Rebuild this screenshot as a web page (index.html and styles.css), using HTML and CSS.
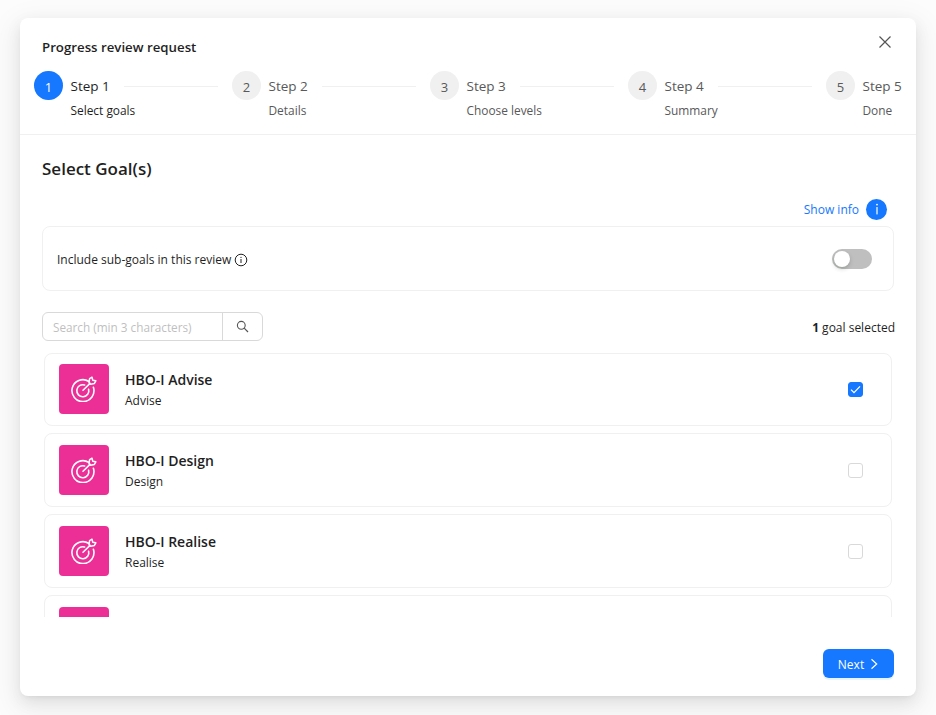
FILE: index.html
```html
<!DOCTYPE html>
<html lang="en">
<head>
<meta charset="utf-8">
<title>Progress review request</title>
<link rel="stylesheet" href="styles.css">
</head>
<body>
<svg class="defs" width="0" height="0" aria-hidden="true">
  <symbol id="target" viewBox="0 0 26 26">
    <path d="M17.6 5.2A11 11 0 1 0 22.4 11.2" fill="none" stroke="currentColor" stroke-width="1.6" stroke-linecap="round"/>
    <path d="M13.6 9A6 6 0 1 0 17.6 13.2" fill="none" stroke="currentColor" stroke-width="1.6" stroke-linecap="round"/>
    <path d="M12 14.3 19 7.4" fill="none" stroke="currentColor" stroke-width="1.6" stroke-linecap="round"/>
    <path d="M18 6.6 18.6 2.6 21 1.2 21.8 4.2 24.8 4.8 23.4 7.4 19.6 8.2z" fill="none" stroke="currentColor" stroke-width="1.5" stroke-linejoin="round"/>
  </symbol>
</svg>
<main class="modal">
  <header class="head">
    <h1 class="title">Progress review request</h1>
    <button class="close" aria-label="Close">
      <svg width="14" height="14" viewBox="0 0 14 14"><path d="M1.5 1.5l11 11M12.5 1.5l-11 11" fill="none" stroke="#555" stroke-width="1.2"/></svg>
    </button>
    <ol class="steps">
      <li class="step active"><span class="num">1</span><div class="step-text"><div class="step-top"><span class="step-name">Step 1</span><i class="line"></i></div><div class="step-sub">Select goals</div></div></li>
      <li class="step"><span class="num">2</span><div class="step-text"><div class="step-top"><span class="step-name">Step 2</span><i class="line"></i></div><div class="step-sub">Details</div></div></li>
      <li class="step"><span class="num">3</span><div class="step-text"><div class="step-top"><span class="step-name">Step 3</span><i class="line"></i></div><div class="step-sub">Choose levels</div></div></li>
      <li class="step"><span class="num">4</span><div class="step-text"><div class="step-top"><span class="step-name">Step 4</span><i class="line"></i></div><div class="step-sub">Summary</div></div></li>
      <li class="step last"><span class="num">5</span><div class="step-text"><div class="step-top"><span class="step-name">Step 5</span></div><div class="step-sub">Done</div></div></li>
    </ol>
  </header>
  <section class="body">
    <h2 class="heading">Select Goal(s)</h2>
    <div class="info-row">
      <a class="show-info">Show info</a>
      <span class="info-badge"><svg width="4" height="12" viewBox="0 0 4 12"><circle cx="2" cy="1.6" r="0.9" fill="#fff"/><rect x="1.4" y="4" width="1.2" height="7.4" fill="#fff"/></svg></span>
    </div>
    <div class="option">
      <span class="option-label">Include sub-goals in this review
        <svg class="tip" width="14" height="14" viewBox="0 0 14 14"><circle cx="7" cy="7" r="5.8" fill="none" stroke="#222" stroke-width="1"/><rect x="6.5" y="6" width="1" height="4" fill="#222"/><rect x="6.5" y="3.9" width="1" height="1.1" fill="#222"/></svg>
      </span>
      <span class="switch"><span class="knob"></span></span>
    </div>
    <div class="search-row">
      <div class="search">
        <span class="search-input">Search (min 3 characters)</span>
        <span class="search-btn"><svg width="13" height="13" viewBox="0 0 13 13"><circle cx="5.3" cy="5.3" r="3.9" fill="none" stroke="#555" stroke-width="1.1"/><path d="M8.2 8.2l3.8 3.8" stroke="#555" stroke-width="1.2"/></svg></span>
      </div>
      <div class="count"><b>1</b> goal selected</div>
    </div>
    <div class="list">
      <article class="goal">
        <span class="goal-icon"><svg width="26" height="26"><use href="#target"/></svg></span>
        <div class="goal-text"><div class="goal-name">HBO-I Advise</div><div class="goal-sub">Advise</div></div>
        <span class="check on"><svg width="11" height="9" viewBox="0 0 11 9"><path d="M1 4.6l3 3L10 1.4" fill="none" stroke="#fff" stroke-width="1.3"/></svg></span>
      </article>
      <article class="goal">
        <span class="goal-icon"><svg width="26" height="26"><use href="#target"/></svg></span>
        <div class="goal-text"><div class="goal-name">HBO-I Design</div><div class="goal-sub">Design</div></div>
        <span class="check"></span>
      </article>
      <article class="goal">
        <span class="goal-icon"><svg width="26" height="26"><use href="#target"/></svg></span>
        <div class="goal-text"><div class="goal-name">HBO-I Realise</div><div class="goal-sub">Realise</div></div>
        <span class="check"></span>
      </article>
      <article class="goal">
        <span class="goal-icon"><svg width="26" height="26"><use href="#target"/></svg></span>
      </article>
    </div>
  </section>
  <footer class="foot">
    <button class="next">Next
      <svg width="9" height="12" viewBox="0 0 9 12"><path d="M1.5 1.2l5.2 4.8-5.2 4.8" fill="none" stroke="#fff" stroke-width="1.2"/></svg>
    </button>
  </footer>
</main>
</body>
</html>
```
FILE: styles.css
```css
* { box-sizing: border-box; }
html, body { margin: 0; height: 100%; }
body {
  background: #fcfcfc;
  padding: 18px 20px 19px;
  font-family: "Open Sans", "Noto Sans", sans-serif;
  font-size: 12px;
  color: #1f1f1f;
  overflow: hidden;
}
.defs { position: absolute; }
.modal {
  width: 896px;
  height: 678px;
  background: #fff;
  border-radius: 8px;
  box-shadow: 0 6px 16px rgba(0,0,0,.08), 0 3px 6px -4px rgba(0,0,0,.12), 0 9px 28px 8px rgba(0,0,0,.05);
  display: flex;
  flex-direction: column;
  overflow: hidden;
}
.head {
  position: relative;
  height: 117px;
  border-bottom: 1px solid #f0f0f0;
  padding: 20px 0 0 14.3px;
}
.title {
  margin: 0 0 0 7.7px;
  font-size: 13.25px;
  line-height: 18px;
  font-weight: 600;
  color: #1f1f1f;
}
.close {
  position: absolute;
  top: 17px;
  right: 24px;
  width: 14px;
  height: 14px;
  padding: 0;
  border: 0;
  background: none;
  display: flex;
}
.steps {
  list-style: none;
  margin: 15px 0 0;
  padding: 0;
  display: flex;
}
.step { width: 198px; flex: none; display: flex; gap: 7.7px; }
.step.last { width: auto; }
.num {
  width: 28.5px;
  height: 29px;
  flex: none;
  border-radius: 50%;
  background: #f0f0f0;
  color: #595959;
  font-size: 13px;
  padding-top: 2px;
  display: flex;
  align-items: center;
  justify-content: center;
}
.active .num { background: #1677ff; color: #fff; }
.step-text { flex: 1; min-width: 0; padding-right: 14px; }
.step.last .step-text { padding-right: 0; }
.step-top { display: flex; align-items: center; gap: 14px; height: 30px; }
.step-name { font-size: 13.5px; color: #595959; white-space: nowrap; }
.active .step-name { color: #1f1f1f; }
.line { flex: 1; height: 1px; background: #f0f0f0; }
.step-sub { font-size: 11.9px; line-height: 18px; color: #595959; white-space: nowrap; }
.active .step-sub { color: #1f1f1f; }
.body {
  flex: 1;
  min-height: 0;
  padding: 21px 22px 0;
  display: flex;
  flex-direction: column;
}
.heading {
  margin: 0;
  font-size: 17px;
  line-height: 26px;
  font-weight: 600;
  color: #1f1f1f;
}
.info-row {
  display: flex;
  justify-content: flex-end;
  align-items: center;
  gap: 7px;
  height: 22px;
  margin-top: 16px;
  padding-right: 7px;
}
.show-info { color: #1677ff; font-size: 12px; }
.info-badge {
  width: 21px;
  height: 21px;
  border-radius: 50%;
  background: #1677ff;
  display: flex;
  align-items: center;
  justify-content: center;
}
.option {
  height: 65px;
  margin-top: 6px;
  border: 1px solid #f0f0f0;
  border-radius: 8px;
  padding: 0 21px 0 14px;
  display: flex;
  align-items: center;
  justify-content: space-between;
}
.option-label { display: flex; align-items: center; gap: 3px; font-size: 12px; padding-top: 2px; }
.switch {
  width: 40px;
  height: 20px;
  border-radius: 10px;
  background: #bfbfbf;
  padding: 2px;
  display: flex;
}
.knob { width: 16px; height: 16px; border-radius: 50%; background: #fff; box-shadow: 0 2px 4px rgba(0,35,11,.2); }
.search-row {
  display: flex;
  align-items: center;
  justify-content: space-between;
  margin-top: 21px;
}
.search {
  width: 221px;
  height: 29px;
  border: 1px solid #d9d9d9;
  border-radius: 6px;
  display: flex;
  align-items: stretch;
}
.search-input {
  flex: 1;
  padding: 0 10px;
  color: #bfbfbf;
  font-size: 11.75px;
  display: flex;
  align-items: center;
  white-space: nowrap;
  border-right: 1px solid #d9d9d9;
}
.search-btn { width: 39px; flex: none; display: flex; align-items: center; justify-content: center; }
.count { font-size: 12px; margin-right: -1px; padding-top: 2px; }
.list {
  flex: 1;
  min-height: 0;
  overflow: hidden;
  margin-top: 11.5px;
  padding: 0 2px;
  display: flex;
  flex-direction: column;
  gap: 7.4px;
}
.goal {
  flex: none;
  height: 73.5px;
  border: 1px solid #f0f0f0;
  border-radius: 8px;
  padding: 0 28px 0 14px;
  display: flex;
  align-items: center;
}
.goal-icon {
  width: 50px;
  height: 50px;
  flex: none;
  border-radius: 4px;
  background: #eb2f96;
  color: #fff;
  display: flex;
  align-items: center;
  justify-content: center;
}
.goal-text { flex: 1; margin-left: 16px; padding-top: 3px; }
.goal-name { font-size: 14px; font-weight: 600; line-height: 20px; }
.goal-sub { font-size: 12px; line-height: 20px; margin-top: 1px; }
.check {
  width: 15px;
  height: 15px;
  border: 1px solid #d9d9d9;
  border-radius: 3px;
  display: flex;
  align-items: center;
  justify-content: center;
}
.check.on { background: #1677ff; border-color: #1677ff; }
.foot {
  height: 79px;
  flex: none;
  padding: 32px 22px 0 0;
  display: flex;
  justify-content: flex-end;
  align-items: flex-start;
}
.next {
  width: 71px;
  height: 29px;
  border: 0;
  border-radius: 6px;
  background: #1677ff;
  color: #fff;
  font: inherit;
  font-size: 12px;
  padding: 1px 0 0;
  display: flex;
  align-items: center;
  justify-content: center;
  gap: 6px;
  box-shadow: 0 2px 0 rgba(5,145,255,.1);
}
```
